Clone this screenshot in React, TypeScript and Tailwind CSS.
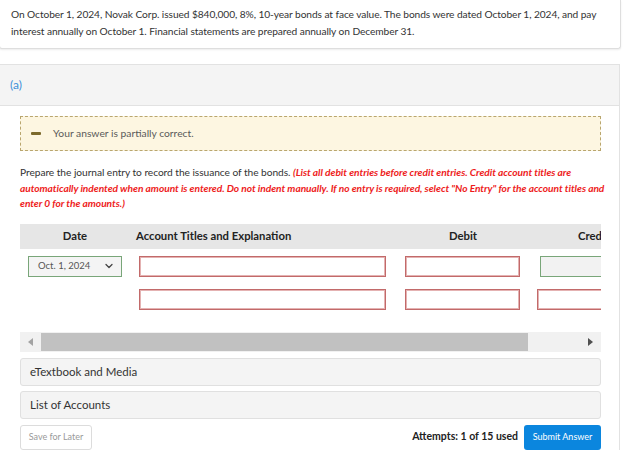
import React from 'react';
import { ChevronDown } from 'lucide-react';

const font = { fontFamily: 'Lato, "Open Sans", sans-serif' };

function RedInput({ className = '' }: { className?: string }) {
  return (
    <div
      className={`h-[21px] border border-[#c26a6a] bg-white shadow-[inset_0_0_0_1px_#e4b2b2] ${className}`}
    />
  );
}

function JournalTable() {
  return (
    <div className="w-[581px] overflow-hidden">
      <div className="w-[640px]">
        {/* header */}
        <div className="flex h-[25px] items-center bg-[#e6e6e6] text-[11.3px] font-bold text-[#222]">
          <div className="w-[110px] text-center">Date</div>
          <div className="w-[266px] pl-[6px]">Account Titles and Explanation</div>
          <div className="w-[134px] text-center">Debit</div>
          <div className="w-[130px] pl-[48px]">Credit</div>
        </div>

        {/* row 1 */}
        <div className="flex items-center pt-[7px]">
          <div className="w-[110px] pl-[8px]">
            <div className="flex h-[21px] w-[94px] items-center justify-between border border-[#79a679] bg-[#f4f4f4] pl-[9px] pr-[6px] text-[9.5px] text-[#555]">
              <span>Oct. 1, 2024</span>
              <ChevronDown size={12} strokeWidth={2.6} className="text-[#444]" />
            </div>
          </div>
          <div className="w-[266px] pl-[9px] pr-[10px]">
            <RedInput />
          </div>
          <div className="w-[134px] pl-[9px] pr-[10px]">
            <RedInput />
          </div>
          <div className="w-[130px] pl-[10px]">
            <div className="h-[21px] border border-[#79a679] bg-[#f2f2f2]" />
          </div>
        </div>

        {/* row 2 */}
        <div className="flex items-center pt-[12px]">
          <div className="w-[110px]" />
          <div className="w-[266px] pl-[9px] pr-[10px]">
            <RedInput />
          </div>
          <div className="w-[134px] pl-[9px] pr-[10px]">
            <RedInput />
          </div>
          <div className="w-[130px] pl-[7px]">
            <RedInput />
          </div>
        </div>
      </div>

      {/* scrollbar */}
      <div className="mt-[22px] flex h-[20px] items-center bg-[#f1f1f1]">
        <div className="flex w-[21px] justify-center">
          <svg width="5" height="8" viewBox="0 0 5 8">
            <path d="M5 0 L0 4 L5 8 Z" fill="#a3a3a3" />
          </svg>
        </div>
        <div className="h-[18px] w-[487px] bg-[#c1c1c1]" />
        <div className="flex flex-1 justify-end pr-[8px]">
          <svg width="5" height="8" viewBox="0 0 5 8">
            <path d="M0 0 L5 4 L0 8 Z" fill="#505050" />
          </svg>
        </div>
      </div>
    </div>
  );
}

export default function App() {
  return (
    <div className="h-[458px] w-[624px] overflow-hidden bg-white" style={font}>
      {/* problem statement */}
      <div className="-ml-px w-[622px] rounded-b-[3px] border border-t-0 border-[#dedede] pb-[8px] pl-[11px] pr-[6px] pt-[6px] text-[10.2px] leading-[17px] tracking-[-0.08px] text-[#333] shadow-[0_1px_2px_rgba(0,0,0,0.08)]">
        On October 1, 2024, Novak Corp. issued $840,000, 8%, 10-year bonds at face value. The bonds were
        dated October 1, 2024, and pay interest annually on October 1. Financial statements are prepared
        annually on December 31.
      </div>

      {/* part (a) */}
      <div className="-ml-px mt-[15px] w-[621px] border border-b-0 border-[#e2e2e2]">
        <div className="flex h-[41px] items-center border-b border-[#e2e2e2] bg-[#f4f4f4] pl-[10px] text-[12px] text-[#3d8fd9]">
          (a)
        </div>

        <div className="pl-[20px] pt-[10px]">
          <div className="flex h-[35px] w-[581px] items-center border border-dashed border-[#b9a66e] bg-[#fdf6e1] pl-[10px] text-[10.3px] text-[#5a5a5a]">
            <span className="mr-[12px] h-[3px] w-[10px] rounded-[1px] bg-[#7c6a2c]" />
            Your answer is partially correct.
          </div>

          <p className="mt-[14px] w-[594px] text-[10.2px] leading-[15.5px] tracking-[-0.05px] text-[#333]">
            Prepare the journal entry to record the issuance of the bonds.{' '}
            <span className="font-bold italic text-[#ee1c1c]">
              (List all debit entries before credit entries. Credit account titles are automatically
              indented when amount is entered. Do not indent manually. If no entry is required, select
              "No Entry" for the account titles and enter 0 for the amounts.)
            </span>
          </p>

          <div className="mt-[12px]">
            <JournalTable />
          </div>

          <div className="mt-[6px] flex h-[28px] w-[581px] items-center rounded-[3px] border border-[#e0e0e0] bg-[#f4f4f4] pl-[9px] text-[11.5px] text-[#333]">
            eTextbook and Media
          </div>
          <div className="mt-[5px] flex h-[28px] w-[581px] items-center rounded-[3px] border border-[#e0e0e0] bg-[#f4f4f4] pl-[9px] text-[11.5px] text-[#333]">
            List of Accounts
          </div>

          <div className="mt-[6px] flex w-[581px] items-center">
            <div className="flex h-[25px] w-[72px] items-center justify-center rounded-[3px] border border-[#dcdcdc] bg-white text-[9px] text-[#9a9a9a]">
              Save for Later
            </div>
            <div className="flex-1" />
            <span className="mr-[6px] text-[10.5px] font-bold text-[#222]">Attempts: 1 of 15 used</span>
            <div className="flex h-[25px] w-[77px] items-center justify-center rounded-[3px] bg-[#0b86de] text-[9px] text-white">
              Submit Answer
            </div>
          </div>
        </div>
      </div>
    </div>
  );
}
